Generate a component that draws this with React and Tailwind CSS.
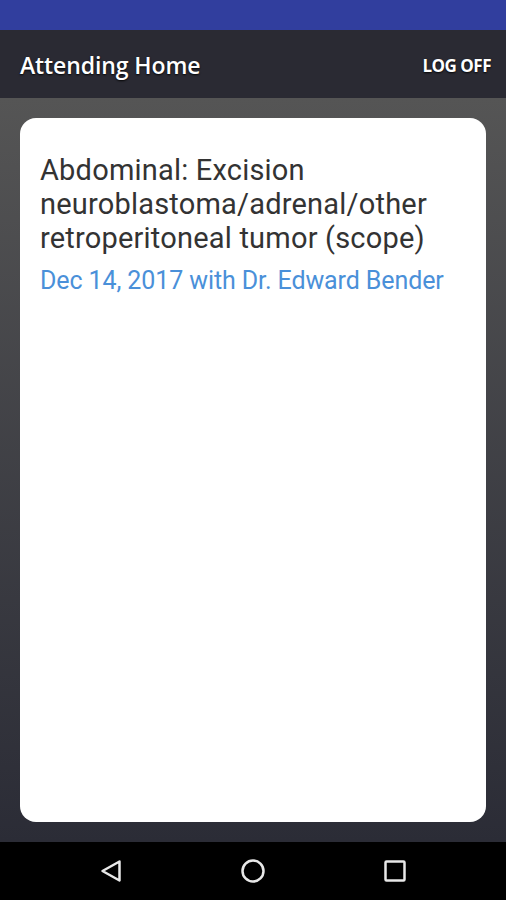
import React from 'react';

const NavBar = () => (
  <div className="h-[58px] bg-black flex items-center justify-between px-[100px]">
    <svg width="22" height="24" viewBox="0 0 22 24" fill="none" stroke="#e8e8e8" strokeWidth="2.5" strokeLinejoin="round">
      <path d="M19.5 2.5 L2.5 12 L19.5 21.5 Z" />
    </svg>
    <svg width="24" height="24" viewBox="0 0 24 24" fill="none" stroke="#e8e8e8" strokeWidth="2.5">
      <circle cx="12" cy="12" r="10.5" />
    </svg>
    <svg width="22" height="22" viewBox="0 0 22 22" fill="none" stroke="#e8e8e8" strokeWidth="2.5">
      <rect x="1.5" y="1.5" width="19" height="19" rx="1" />
    </svg>
  </div>
);

export default function App() {
  return (
    <div className="w-[506px] h-[900px] flex flex-col overflow-hidden">
      <div className="h-[30px] bg-[#313e9e]" />

      <div className="h-[68px] bg-[#2a2a33] flex items-center justify-between pl-5 pr-[15px] pt-[3px]">
        <h1
          className="text-white text-[23px] font-semibold tracking-[-0.1px] [text-shadow:0_1px_2px_rgba(0,0,0,0.9)]"
          style={{ fontFamily: '"Open Sans", sans-serif' }}
        >
          Attending Home
        </h1>
        <button
          className="text-white text-[17px] font-bold tracking-[-0.5px] [text-shadow:0_1px_2px_rgba(0,0,0,0.9)]"
          style={{ fontFamily: '"Open Sans", sans-serif' }}
        >
          LOG OFF
        </button>
      </div>

      <div className="flex-1 bg-gradient-to-b from-[#555555] to-[#2b2c36] p-5 flex">
        <div className="flex-1 bg-white rounded-[16px] px-5 pt-[35px]" style={{ fontFamily: 'Roboto, sans-serif' }}>
          <p className="text-[29px] leading-[34px] tracking-[0.2px] text-[#333333]">
            Abdominal: Excision neuroblastoma/adrenal/other retroperitoneal tumor (scope)
          </p>
          <p className="text-[25px] leading-[30px] tracking-[-0.1px] text-[#4a90d9] mt-[11px]">
            Dec 14, 2017 with Dr. Edward Bender
          </p>
        </div>
      </div>

      <NavBar />
    </div>
  );
}
